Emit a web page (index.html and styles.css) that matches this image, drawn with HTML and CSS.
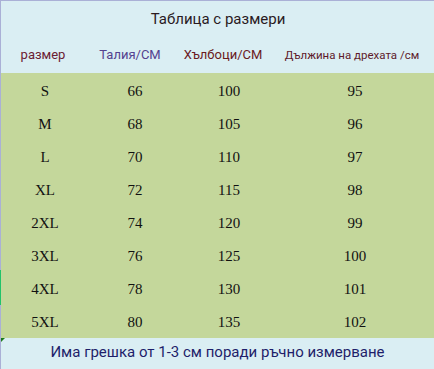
FILE: index.html
```html
<!DOCTYPE html>
<html lang="bg">
<head>
<meta charset="utf-8">
<title>Таблица с размери</title>
<link rel="stylesheet" href="styles.css">
</head>
<body>
<div class="sheet">
  <div class="head">
    <div class="title">Таблица с размери</div>
    <div class="cols">
      <div class="hc c-size">размер</div>
      <div class="hc c-waist">Талия/СМ</div>
      <div class="hc c-hips">Хълбоци/СМ</div>
      <div class="hc c-len">Дължина на дрехата /см</div>
    </div>
  </div>
  <div class="body">
    <span class="marker"></span>
    <div class="row"><div>S</div><div>66</div><div>100</div><div>95</div></div>
    <div class="row"><div>M</div><div>68</div><div>105</div><div>96</div></div>
    <div class="row"><div>L</div><div>70</div><div>110</div><div>97</div></div>
    <div class="row"><div>XL</div><div>72</div><div>115</div><div>98</div></div>
    <div class="row"><div>2XL</div><div>74</div><div>120</div><div>99</div></div>
    <div class="row"><div>3XL</div><div>76</div><div>125</div><div>100</div></div>
    <div class="row"><div>4XL</div><div>78</div><div>130</div><div>101</div></div>
    <div class="row"><div>5XL</div><div>80</div><div>135</div><div>102</div></div>
  </div>
  <div class="foot">
    <span class="corner"></span>
    Има грешка от 1-3 см поради ръчно измерване
  </div>
</div>
</body>
</html>
```
FILE: styles.css
```css
html, body {
  margin: 0;
  padding: 0;
  background: #daeef3;
}
.sheet {
  width: 434px;
  height: 369px;
  box-sizing: border-box;
  border-top: 1px solid #aab0d6;
  border-left: 1px solid #aab0d6;
  display: flex;
  flex-direction: column;
  font-family: Roboto, "Noto Sans", sans-serif;
}
.head {
  height: 72px;
  background: #daeef3;
  display: flex;
  flex-direction: column;
}
.title {
  text-align: center;
  font-size: 15px;
  color: #2a1a1e;
  padding-top: 9px;
  height: 18px;
  line-height: 18px;
  padding-left: 1px;
}
.cols {
  display: grid;
  grid-template-columns: 84px 90px 96px 162px;
  margin-top: 19px;
  line-height: 16px;
  font-size: 13px;
}
.hc { text-align: center; }
.c-size { color: #6a2032; }
.c-waist { color: #54428f; }
.c-hips { color: #6a1a1e; }
.c-len { color: #5e1a2a; font-size: 11.5px; }
.body {
  position: relative;
  background: #c4d79b;
  height: 265px;
  display: flex;
  flex-direction: column;
  font-family: "Liberation Serif", "Times New Roman", serif;
  font-size: 15px;
  color: #111;
}
.row {
  height: 33.125px;
  display: grid;
  grid-template-columns: 88px 92px 96px 156px;
  align-items: center;
  padding-bottom: 0;
}
.row > div { text-align: center; line-height: 16px; padding-top: 2px; }
.marker {
  position: absolute;
  left: -1px;
  top: 197px;
  width: 1px;
  height: 35px;
  background: #22c36a;
}
.foot {
  position: relative;
  flex: 1;
  background: #daeef3;
  color: #1e1e6a;
  font-size: 15px;
  text-align: center;
  line-height: 18px;
  padding-top: 5px;
}
.corner {
  position: absolute;
  left: 0;
  top: 0;
  width: 0;
  height: 0;
  border-top: 4px solid #1a7a1a;
  border-right: 4px solid transparent;
}
```
